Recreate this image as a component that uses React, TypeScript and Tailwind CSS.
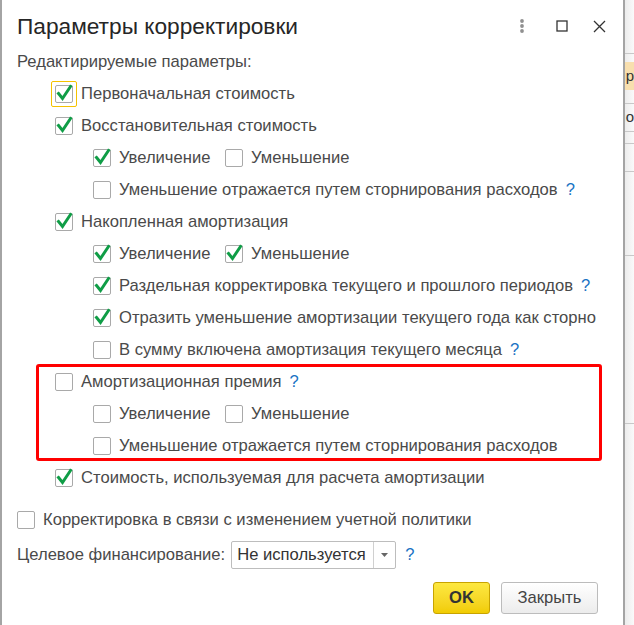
import React from "react";

const Check = ({ checked, focus }: { checked?: boolean; focus?: boolean }) => (
  <div className="relative w-[18px] h-[18px] shrink-0">
    {focus && (
      <div className="absolute -left-[4px] -top-[4px] w-[26px] h-[26px] border border-[#f5c200] rounded-[2px]" />
    )}
    <div className="absolute inset-0 border border-[#a9a9a9] rounded-[2px] bg-white" />
    {checked && (
      <svg className="absolute left-0 top-0 overflow-visible" width="18" height="18" viewBox="0 0 18 18">
        <path d="M3.5 8.5 L7.5 13.5 L15.5 1.5" fill="none" stroke="#0f9d46" strokeWidth="3" strokeLinecap="square" strokeLinejoin="miter" />
      </svg>
    )}
  </div>
);

const Q = () => <span className="text-[#1a73c4] ml-[8px]">?</span>;

const Item = ({ checked, focus, label, q, w }: { checked?: boolean; focus?: boolean; label: string; q?: boolean; w?: string }) => (
  <div className={`flex items-center gap-[8px] ${w ?? ""}`}>
    <Check checked={checked} focus={focus} />
    <span className="whitespace-nowrap">
      {label}
      {q && <Q />}
    </span>
  </div>
);

export default function App() {
  return (
    <div className="flex w-[634px] h-[625px] overflow-hidden bg-white font-['Liberation_Sans',Arial,sans-serif] text-[16.6px] text-[#4a4a4a]">
      <div className="w-[625px] shrink-0 h-full border-l-2 border-r-2 border-[#a4a4a4] bg-white pl-[15px] flex flex-col">
        {/* header */}
        <div className="h-[52px] flex items-center">
          <div className="text-[22.7px] text-[#262626] leading-none">Параметры корректировки</div>
          <div className="ml-auto flex items-center h-full">
            <svg width="6" height="14" viewBox="0 0 6 14" className="mr-[31px]">
              <circle cx="3" cy="2" r="1.9" fill="#909090" />
              <circle cx="3" cy="7" r="1.9" fill="#909090" />
              <circle cx="3" cy="12" r="1.9" fill="#909090" />
            </svg>
            <svg width="12" height="12" viewBox="0 0 12 12" className="mr-[25px]">
              <rect x="1" y="1" width="10" height="10" fill="none" stroke="#333" strokeWidth="1.3" />
            </svg>
            <svg width="13" height="13" viewBox="0 0 13 13" className="mr-[17px]">
              <path d="M1 1 L12 12 M12 1 L1 12" stroke="#333" strokeWidth="1.3" />
            </svg>
          </div>
        </div>
        <div className="h-[20px] flex items-center">Редактирируемые параметры:</div>
        <div className="mt-[6px] flex flex-col">
          <div className="h-[32px] flex items-center pl-[38px]">
            <Item checked focus label="Первоначальная стоимость" />
          </div>
          <div className="h-[32px] flex items-center pl-[38px]">
            <Item checked label="Восстановительная стоимость" />
          </div>
          <div className="h-[32px] flex items-center pl-[76px]">
            <Item checked label="Увеличение" w="w-[132px]" />
            <Item label="Уменьшение" />
          </div>
          <div className="h-[32px] flex items-center pl-[76px]">
            <Item label="Уменьшение отражается путем сторнирования расходов" q />
          </div>
          <div className="h-[32px] flex items-center pl-[38px]">
            <Item checked label="Накопленная амортизация" />
          </div>
          <div className="h-[32px] flex items-center pl-[76px]">
            <Item checked label="Увеличение" w="w-[132px]" />
            <Item checked label="Уменьшение" />
          </div>
          <div className="h-[32px] flex items-center pl-[76px]">
            <Item checked label="Раздельная корректировка текущего и прошлого периодов" q />
          </div>
          <div className="h-[32px] flex items-center pl-[76px]">
            <Item checked label="Отразить уменьшение амортизации текущего года как сторно" />
          </div>
          <div className="h-[32px] flex items-center pl-[76px]">
            <Item label="В сумму включена амортизация текущего месяца" q />
          </div>
          <div className="relative flex flex-col">
            <div className="h-[32px] flex items-center pl-[38px]">
              <Item label="Амортизационная премия" q />
            </div>
            <div className="h-[32px] flex items-center pl-[76px]">
              <Item label="Увеличение" w="w-[132px]" />
              <Item label="Уменьшение" />
            </div>
            <div className="h-[32px] flex items-center pl-[76px]">
              <Item label="Уменьшение отражается путем сторнирования расходов" />
            </div>
            <div className="absolute left-[19px] -top-[2px] w-[566px] h-[97px] border-[3px] border-[#ff0000] rounded-[3px] pointer-events-none" />
          </div>
          <div className="h-[32px] flex items-center pl-[38px]">
            <Item checked label="Стоимость, используемая для расчета амортизации" />
          </div>
        </div>
        <div className="mt-[10px] h-[32px] flex items-center">
          <Item label="Корректировка в связи с изменением учетной политики" />
        </div>
        <div className="mt-[5px] h-[28px] flex items-center">
          <span className="whitespace-nowrap">Целевое финансирование:</span>
          <div className="ml-[6px] w-[165px] h-[28px] border border-[#bdbdbd] rounded-[2px] flex items-center bg-white">
            <span className="pl-[5px] flex-1 whitespace-nowrap overflow-hidden text-[#333]">Не используется</span>
            <div className="w-[22px] h-full border-l border-[#d0d0d0] flex items-center justify-center">
              <svg width="7" height="4" viewBox="0 0 7 4"><path d="M0 0 L7 0 L3.5 4 Z" fill="#666" /></svg>
            </div>
          </div>
          <span className="text-[#1a73c4] ml-[9px]">?</span>
        </div>
        <div className="mt-[13px] flex justify-end pr-[25px] gap-[11px]">
          <div className="w-[57px] h-[32px] rounded-[3px] border border-[#c8a300] bg-gradient-to-b from-[#fde83f] to-[#f1cc00] flex items-center justify-center font-bold text-[#333]">
            OK
          </div>
          <div className="w-[97px] h-[32px] rounded-[3px] border border-[#bcbcbc] bg-gradient-to-b from-white to-[#ececec] flex items-center justify-center text-[#444]">
            Закрыть
          </div>
        </div>
      </div>
      <div className="flex-1 h-full bg-gradient-to-r from-[#ececec] to-[#fafafa] flex flex-col text-[15px] text-[#333] overflow-hidden">
        <div className="h-[53px] shrink-0" />
        <div className="h-[1px] bg-[#c8c8c8] shrink-0" />
        <div className="h-[8px] shrink-0" />
        <div className="h-[28px] bg-[#f8dfae] shrink-0 flex items-center justify-end whitespace-nowrap overflow-hidden">пр</div>
        <div className="h-[13px] shrink-0" />
        <div className="h-[1px] bg-[#c8c8c8] shrink-0" />
        <div className="h-[27px] shrink-0 flex items-center justify-end whitespace-nowrap overflow-hidden">по</div>
        <div className="h-[1px] bg-[#c8c8c8] shrink-0" />
        <div className="h-[11px] shrink-0" />
        <div className="h-[1px] bg-[#c8c8c8] shrink-0" />
        <div className="h-[27px] shrink-0" />
        <div className="h-[1px] bg-[#c8c8c8] shrink-0" />
        <div className="h-[83px] shrink-0" />
        <div className="h-[1px] bg-[#c8c8c8] shrink-0" />
        <div className="h-[167px] shrink-0" />
        <div className="h-[1px] bg-[#c8c8c8] shrink-0" />
      </div>
    </div>
  );
}
